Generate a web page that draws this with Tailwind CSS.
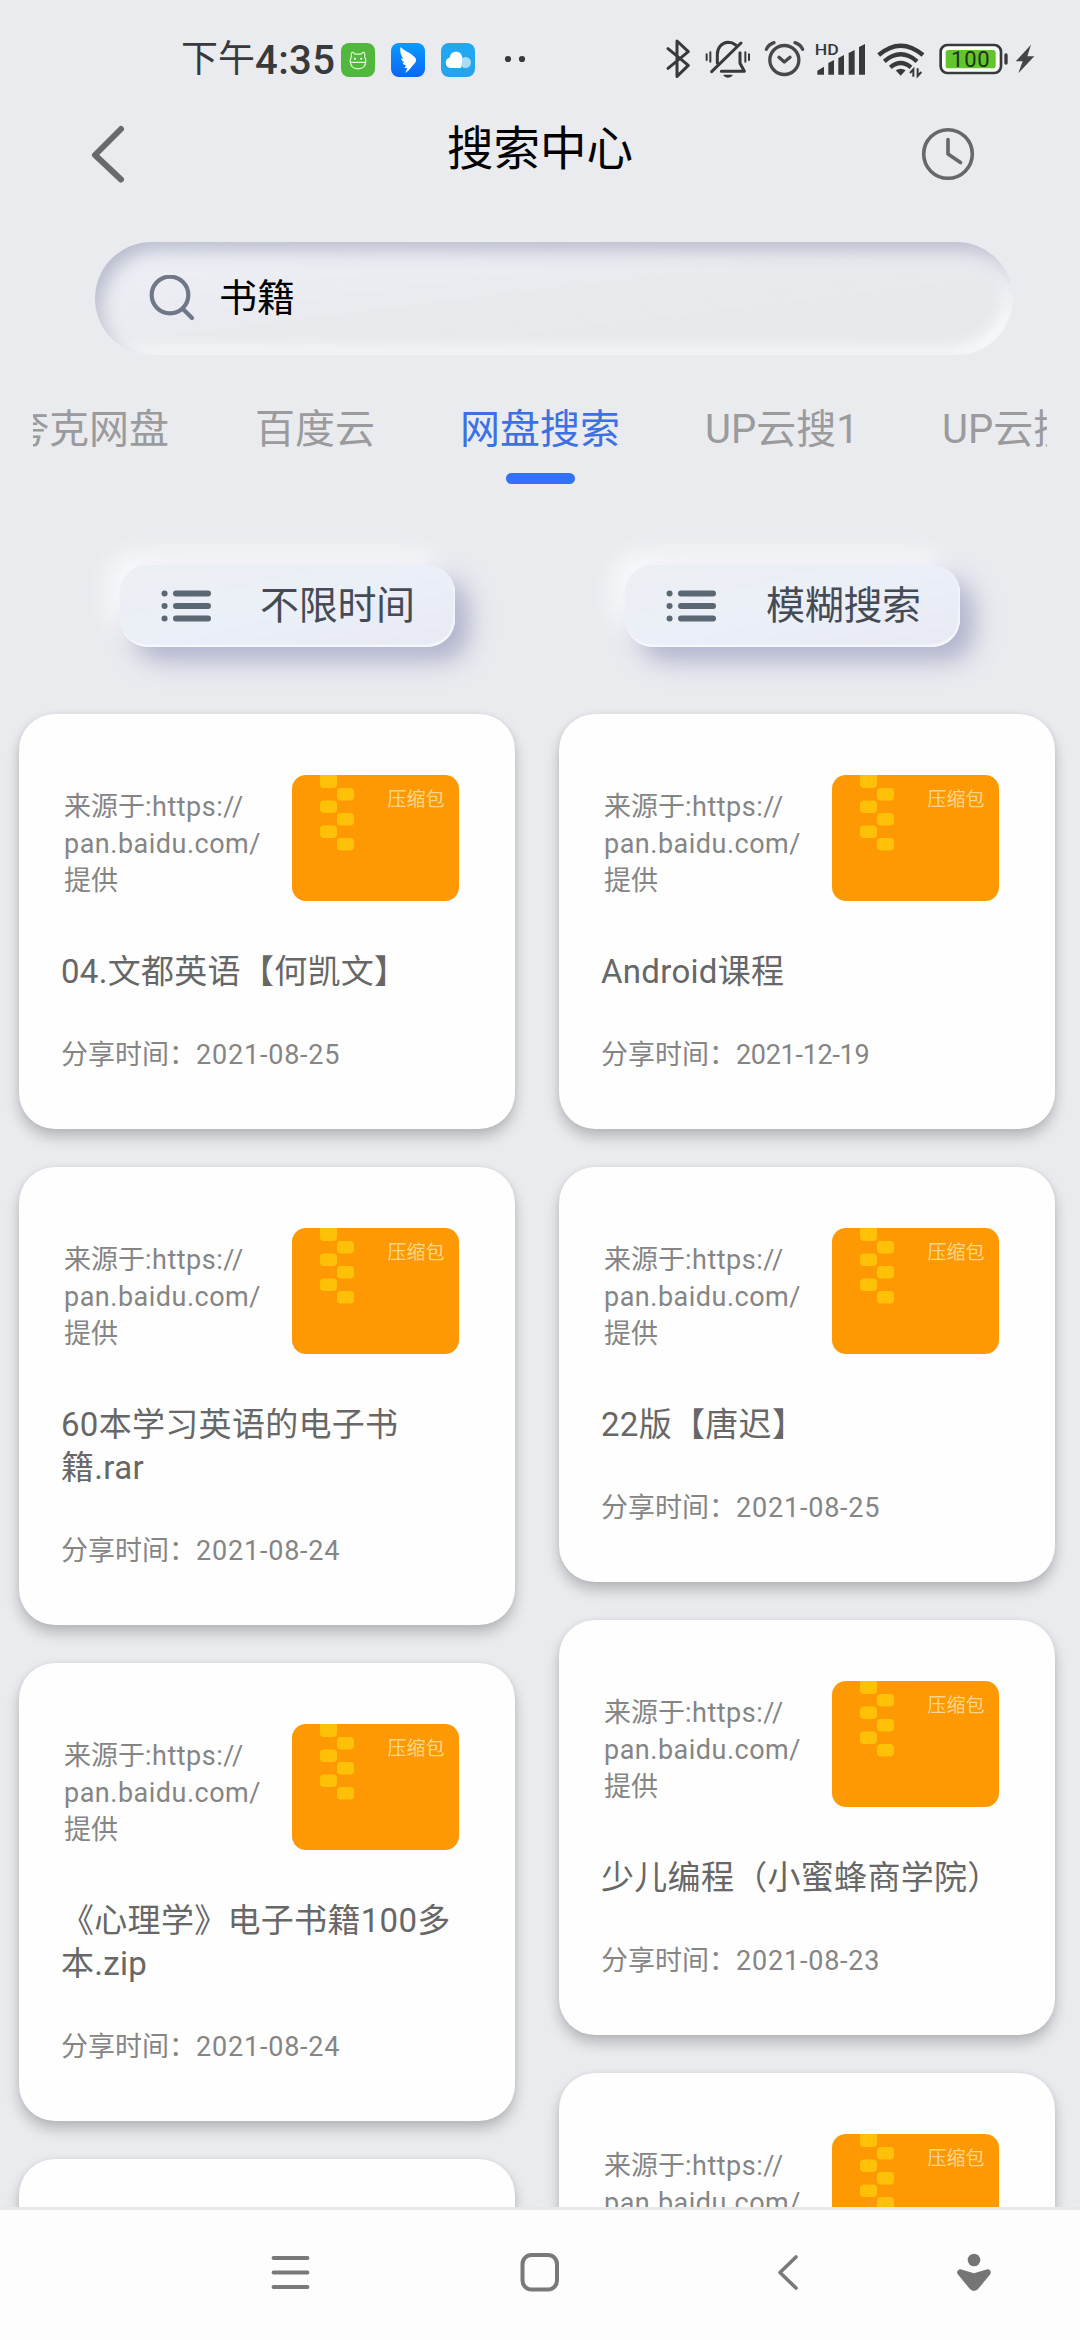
<!DOCTYPE html>
<html lang="zh-CN">
<head>
<meta charset="utf-8">
<title>搜索中心</title>
<script src="https://cdn.jsdelivr.net/npm/@tailwindcss/browser@4"></script>
</head>
<body class="w-[1080px] h-[2340px] overflow-hidden bg-[#e9ebef] flex flex-col font-[Roboto,'Noto_Sans_CJK_SC',sans-serif]">

<!-- Status bar -->
<header class="h-[100px] shrink-0 flex pt-5 pl-[181px]">
  <div class="w-[160px] h-20 shrink-0 flex items-center text-[#38393b] whitespace-nowrap">
    <span class="text-[37px] leading-[80px]">下午</span><span class="text-[40px] leading-[80px] pt-px tracking-[0.4px] font-medium">4:35</span>
  </div>
  <div class="h-20 shrink-0 flex items-center gap-4">
    <svg class="size-[34px]" viewBox="0 0 34 34"><rect width="34" height="34" rx="8" fill="#50b83c"/><g fill="none" stroke="#e4f6dc" stroke-width="1.2" stroke-linejoin="round"><path d="M9.200 18.500c0-2 .4-3.500 1.300-5-.6-1.800-.4-4 1-4.200 1.300-.2 1.800.9 2.300 1.900h6.400c.5-1 1-2.100 2.300-1.900 1.400.2 1.600 2.400 1 4.200.9 1.500 1.300 3 1.300 5-.3 4.700-3 7.300-7.800 7.300s-7.500-2.600-7.800-7.300zM9.200 19.300h15.600"/></g><circle cx="13.800" cy="15.800" r="1" fill="#fff"/><circle cx="20.200" cy="15.800" r="1" fill="#fff"/></svg>
    <svg class="size-[34px]" viewBox="0 0 34 34"><defs><linearGradient id="db" x1="0" y1="0" x2="0" y2="1"><stop offset="0" stop-color="#0a9bff"/><stop offset="1" stop-color="#0b66f5"/></linearGradient></defs><rect width="34" height="34" rx="8" fill="url(#db)"/><path d="M9.500 4c3 3.500 11 6 14.500 10.500 1.500 2 1.500 3.200.3 5L18 27l-3.500 3 1.700-5h-3l2-2.500c-2-.3-3.200-1.500-3.700-2.700l2 .2c-2-1.500-3-3-3.200-4.700l2 .6C9.800 12.500 8.500 7.500 9.500 4z" fill="#fff"/></svg>
    <svg class="size-[34px]" viewBox="0 0 34 34"><defs><linearGradient id="cb" x1="0" y1="0" x2="0" y2="1"><stop offset="0" stop-color="#1fa8f5"/><stop offset="1" stop-color="#28a2ea"/></linearGradient></defs><rect width="34" height="34" rx="8" fill="url(#cb)"/><circle cx="24.500" cy="19.500" r="5.500" fill="#a8dcfa"/><path d="M20 25H9.500a5.400 5.400 0 0 1-.6-10.600 6.200 6.200 0 0 1 12-1.500c.7 1.800.2 3 .2 4.600z" fill="#fff"/></svg>
  </div>
  <svg class="w-[30px] h-20 ml-[25px] shrink-0" viewBox="0 0 30 80" fill="#38393b"><circle cx="8" cy="39" r="3.100"/><circle cx="22" cy="39" r="3.100"/></svg>

  <div class="flex h-20 shrink-0 ml-[135px]">
    <svg class="w-10 h-20 shrink-0" viewBox="75 0 120 240" fill="none" stroke="#38393b" stroke-width="9" stroke-linejoin="round" stroke-linecap="round"><path d="M84 86l61 50-34 33V63l34 32-61 50"/></svg>
    <svg class="w-[55px] h-20 shrink-0" viewBox="195 0 165 240" fill="none" stroke="#38393b" stroke-width="9" stroke-linecap="round" stroke-linejoin="round"><path d="M303 69l-88 86"/><path d="M232 129V103c0-19 13-35 32-36 10 0 17 3 23 8M300 98v32l13 24h-69"/><path d="M252 166q12 10 24 0z" fill="#38393b" stroke-width="4"/><path d="M200 103v17M211 97v28M316 97v28M327 103v17" stroke-width="6"/></svg>
    <svg class="w-[50px] h-20 shrink-0" viewBox="360 0 150 240" fill="none" stroke="#48484a" stroke-width="10" stroke-linecap="round" stroke-linejoin="round"><circle cx="433" cy="120" r="43.500"/><path d="M417 112l16 14 17-14M379 88q7-15 23-20M488 88q-7-15-23-20"/></svg>
    <svg class="w-[60px] h-20 shrink-0" viewBox="510 0 180 240" fill="#38393b"><text x="524" y="104" font-size="46" font-weight="500" textLength="72" lengthAdjust="spacingAndGlyphs">HD</text><path d="M532 164v-12l20-12v24zM565 164v-35l17-9v44zM595 164v-50l17-9v59zM626 164V99l18-9v74zM657 164V81l18-9v92z"/></svg>
    <svg class="w-[60px] h-20 shrink-0 ml-[3px]" viewBox="700 0 180 240" fill="none" stroke="#38393b" stroke-width="13"><path d="M717 105q66-56 133 0M734 124q49-42 98 0M752 142q31-26 62 0"/><path d="M768 151q15-10 30 0l-15 16z" fill="#38393b" stroke="none"/><path d="M821 170v-22l-10 11M834 145v23l11-12" stroke-width="6"/></svg>
    <svg class="w-[74px] h-20 shrink-0 ml-[4px]" viewBox="890 0 222 240"><rect x="901" y="75" width="181" height="84" rx="20" fill="#fff" stroke="#38393b" stroke-width="8"/><rect x="916" y="90" width="150" height="55" rx="8" fill="#61c52c"/><text x="990" y="142" font-size="66" text-anchor="middle" textLength="116" fill="#1d3318">100</text><path d="M1097 105v24" stroke="#38393b" stroke-width="10" stroke-linecap="round"/></svg>
    <svg class="w-[26px] h-20 shrink-0" viewBox="1112 0 78 240"><path d="M1172 74l-46 50h21l-13 36 48-51h-21z" fill="#444548"/></svg>
  </div>
</header>

<!-- Page header -->
<div class="h-[106px] shrink-0 grid grid-cols-3 items-center pl-[90px] pr-[90px]">
  <svg class="w-[38px] h-[60px] translate-y-px" viewBox="0 0 38 60" fill="none" stroke="#696a6c" stroke-width="6" stroke-linecap="round" stroke-linejoin="round"><path d="M31 5L5 31l26 24.500"/></svg>
  <h1 class="justify-self-center text-[46.500px] leading-[60px] text-black -translate-y-[4px]">搜索中心</h1>
  <svg class="size-[56px] justify-self-end mr-[14px]" viewBox="0 0 56 56" fill="none" stroke="#67686b" stroke-width="3.600" stroke-linecap="round" stroke-linejoin="round"><circle cx="28" cy="29" r="24.300"/><path d="M28 14.500V29l12.500 8.500"/></svg>
</div>

<!-- Search field -->
<div class="mt-9 ml-[95px] w-[918px] h-[113px] shrink-0 rounded-full flex items-center pl-[54px] bg-linear-to-br from-[#eef0f7] via-[#e9eaee] to-[#e6e8ec] shadow-[inset_8px_10px_18px_-2px_#b9bccd,inset_-8px_-8px_16px_-2px_#fafbfd]">
  <svg class="size-[48px]" viewBox="0 0 48 48" fill="none" stroke="#707789" stroke-width="4.200" stroke-linecap="round"><circle cx="21" cy="20" r="18.300"/><path d="M34 34l9 9"/></svg>
  <span class="text-[38px] leading-[50px] text-black ml-[22px] -translate-y-px">书籍</span>
</div>

<!-- Source tabs -->
<nav class="mx-[33px] mt-[39px] h-[98px] shrink-0 overflow-hidden flex justify-start text-[40px] leading-[72px] text-[#9b9b9d] whitespace-nowrap">
  <div class="flex gap-[84px] -ml-[24px]">
    <span class="w-40">夸克网盘</span>
    <span class="w-[124px] pl-0.5">百度云</span>
    <span class="w-40 -ml-px mr-px text-[#3d70e5] flex flex-col items-center">网盘搜索<i class="block w-[69px] h-[11px] rounded-full bg-[#3370fb] mt-[7px]"></i></span>
    <span class="w-[153px]">UP云搜1</span>
    <span>UP云搜2</span>
  </div>
</nav>

<!-- Filters -->
<div class="mt-[73px] ml-[120px] flex gap-[170px] h-[82px] shrink-0 text-[39px] text-[#454b55]">
  <button class="w-[335px] h-[82px] rounded-[28px] flex items-center pl-[41px] bg-linear-to-br from-[#eceff3] via-[#ebeff7] to-[#e7eaf2] shadow-[14px_14px_24px_rgba(140,142,182,0.6),-12px_-12px_24px_rgba(252,252,254,0.9),inset_-1px_-2px_2px_#f8f9fd]">
    <svg class="w-[52px] h-[36px]" viewBox="0 0 52 36" stroke="#5b6873" stroke-width="6" stroke-linecap="round"><path d="M15 5.500h32M15 18h32M15 30.500h32M3.500 5.500h.1M3.500 18h.1M3.500 30.500h.1"/></svg>
    <span class="ml-[47px] leading-[60px] tracking-[-0.3px]">不限时间</span>
  </button>
  <button class="w-[335px] h-[82px] rounded-[28px] flex items-center pl-[41px] bg-linear-to-br from-[#eceff3] via-[#ebeff7] to-[#e7eaf2] shadow-[14px_14px_24px_rgba(140,142,182,0.6),-12px_-12px_24px_rgba(252,252,254,0.9),inset_-1px_-2px_2px_#f8f9fd]">
    <svg class="w-[52px] h-[36px]" viewBox="0 0 52 36" stroke="#5b6873" stroke-width="6" stroke-linecap="round"><path d="M15 5.500h32M15 18h32M15 30.500h32M3.500 5.500h.1M3.500 18h.1M3.500 30.500h.1"/></svg>
    <span class="ml-[48px] leading-[60px] tracking-[-0.3px]">模糊搜索</span>
  </button>
</div>

<!-- Results -->
<main class="grow min-h-0 overflow-hidden pt-[67px] pl-[19px] flex items-start gap-[44px]">
  <section id="left" class="w-[496px] flex flex-col gap-[38px]"></section>
  <section id="right" class="w-[496px] flex flex-col gap-[38px]"></section>
</main>

<!-- System navigation -->
<footer class="h-[133px] shrink-0 bg-[#fdfdfd] border-t-[3px] border-[#e8e8e9] flex items-start pt-[38px] pl-[266px]">
  <svg class="size-12" viewBox="0 0 48 48" stroke="#79797a" stroke-width="3.800" stroke-linecap="round"><path d="M7.500 10h34M7.500 24.500h34M7.500 39h34"/></svg>
  <svg class="size-12 ml-[202px]" viewBox="0 0 48 48" fill="none" stroke="#79797a" stroke-width="4"><rect x="6.500" y="7" width="34.500" height="34.500" rx="9"/></svg>
  <svg class="size-12 ml-[200px]" viewBox="0 0 48 48" fill="none" stroke="#79797a" stroke-width="3.600" stroke-linecap="round" stroke-linejoin="round"><path d="M32 9L16 24.500 32 40"/></svg>
  <svg class="size-12 ml-[138px]" viewBox="0 0 48 48" fill="#757576"><circle cx="24" cy="12" r="6.300"/><path d="M10.500 24.500L24 28.500l13.500-4L26 38.500q-2 2.500-4 0z" stroke="#757576" stroke-width="6.500" stroke-linejoin="round"/></svg>
</footer>

<script>
  const results = {
    left: [
      ['04.文都英语【何凯文】', '2021-08-25'],
      ['60本学习英语的电子书<br>籍.rar', '2021-08-24'],
      ['《心理学》电子书籍100多<br>本.zip', '2021-08-24'],
      ['考研英语', '2021-08-24'],
    ],
    right: [
      ['Android课程', '2021-12-19', 'tracking-[-0.3px]'],
      ['22版【唐迟】', '2021-08-25'],
      ['少儿编程（小蜜蜂商学院）', '2021-08-23'],
      ['电子书籍', '2021-08-23'],
    ],
  };
  const zip = `
    <svg class="w-[167px] h-[126px] shrink-0" viewBox="0 0 167 126">
      <rect width="167" height="126" rx="14" fill="#ff9903"/>
      <g fill="#ffc107">
        <path d="M28 0h17v9q0 4-4 4h-9q-4 0-4-4z"/>
        <rect x="45" y="13" width="17" height="12.500" rx="4"/>
        <rect x="28" y="25.500" width="17" height="12.500" rx="4"/>
        <rect x="45" y="38" width="17" height="12.500" rx="4"/>
        <rect x="28" y="50.500" width="17" height="12.500" rx="4"/>
        <rect x="45" y="63" width="17" height="12.500" rx="4"/>
      </g>
      <text x="95.500" y="31" font-size="19" fill="#ffd58a">压缩包</text>
    </svg>`;
  const card = ([title, date, tracking = 'tracking-[0.8px]']) => `
    <article class="rounded-[36px] bg-[#fefefe] pt-[61px] pb-[55px] pl-[42px] shadow-[0_8px_14px_rgba(0,0,0,0.22),0_0_5px_rgba(0,0,0,0.06)]">
      <div class="flex">
        <p class="w-[228px] pl-[3px] pt-[14px] mr-[3px] text-[27px] leading-[37px] text-[#858585] whitespace-nowrap">来源于<span class="tracking-[0.5px]">:https://<br>pan.baidu.com/</span><br>提供</p>
        ${zip}
      </div>
      <h2 class="mt-[49px] text-[33px] leading-[43px] tracking-[0.3px] text-[#676767] whitespace-nowrap">${title}</h2>
      <p class="mt-[43px] text-[27px] leading-[38px] text-[#858585] whitespace-nowrap">分享时间：<span class="${tracking}">${date}</span></p>
    </article>`;
  for (const side in results) document.getElementById(side).innerHTML = results[side].map(card).join('');
</script>
</body>
</html>
